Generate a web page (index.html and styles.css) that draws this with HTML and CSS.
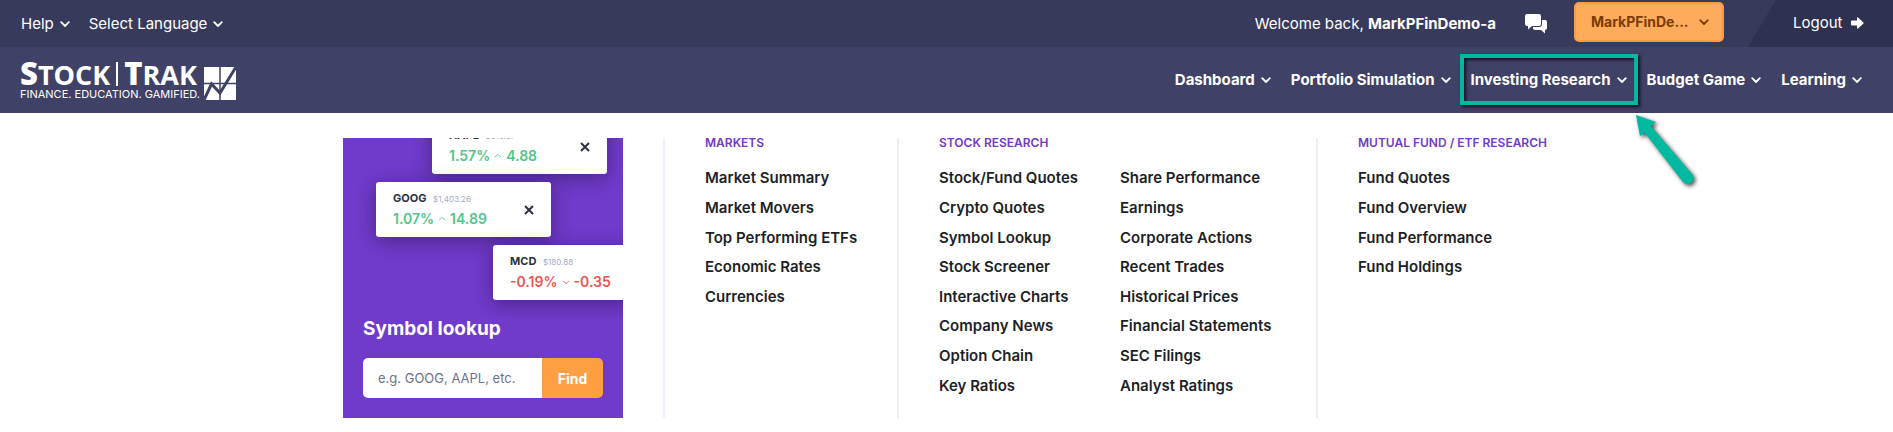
FILE: index.html
```html
<!DOCTYPE html>
<html lang="en">
<head>
  <meta charset="UTF-8" />
  <meta name="viewport" content="width=device-width, initial-scale=1.0" />
  <title>Stock-Trak | Investing Research</title>
  <link rel="stylesheet" href="styles.css">
</head>
<body>
  <!-- shared icons -->
  <svg class="sprite" aria-hidden="true">
    <symbol id="chevron" viewBox="0 0 10 10">
      <path d="M1.2 3.2 5 7 8.8 3.2" fill="none" stroke="currentColor" stroke-width="1.8" stroke-linecap="round" stroke-linejoin="round" />
    </symbol>
    <symbol id="close" viewBox="0 0 10 10">
      <path d="M1 1 9 9M9 1 1 9" fill="none" stroke="currentColor" stroke-width="2" />
    </symbol>
    <symbol id="trend" viewBox="0 0 10 10">
      <path d="M1 6.5 5 3 9 6.5" fill="none" stroke="currentColor" stroke-width="1" />
    </symbol>
  </svg>

  <header>
    <div class="topbar">
      <nav class="top-links" aria-label="Help and language">
        <a href="#">Help <svg class="chevron"><use href="#chevron" /></svg></a>
        <a href="#">Select Language <svg class="chevron"><use href="#chevron" /></svg></a>
      </nav>
      <p class="welcome">Welcome back, <strong>MarkPFinDemo-a</strong></p>
      <a class="chat" href="#" aria-label="Messages">
        <svg viewBox="0 0 22 20">
          <path d="M17 6h3a2 2 0 0 1 2 2v6a2 2 0 0 1-2 2v3.500L16 16h-6a2 2 0 0 1-2-2v-1h6a3 3 0 0 0 3-3z" fill="currentColor" />
          <path d="M2 0h12a2 2 0 0 1 2 2v8a2 2 0 0 1-2 2H7l-4 3.500V12H2a2 2 0 0 1-2-2V2a2 2 0 0 1 2-2z" fill="currentColor" />
        </svg>
      </a>
      <button class="account" type="button">MarkPFinDe... <svg class="chevron"><use href="#chevron" /></svg></button>
      <a class="logout" href="#">Logout
        <svg viewBox="0 0 13 12"><path d="M1 3.500h5V1q0-1 1-.5l5.500 5q.5.5 0 1L7 11.500q-1 .5-1-.5V8.500H1q-1 0-1-1v-3q0-1 1-1z" fill="currentColor" /></svg>
      </a>
    </div>

    <div class="mainbar">
      <a class="logo" href="#">
        <span class="logo-text">
          <span class="logo-name"><b>S</b>TOCK<i></i><b>T</b>RAK</span>
          <span class="logo-tag">FINANCE. EDUCATION. GAMIFIED.</span>
        </span>
        <svg class="logo-mark" viewBox="0 0 32 33">
          <path d="M0 0h32v33H0z" fill="#fff" />
          <path d="M16 0v33M0 16.500h32" stroke="#3f4166" stroke-width="1.500" />
          <path d="M0 33 7.500 17l8.500 9L32 0" fill="none" stroke="#3f4166" stroke-width="3" />
        </svg>
      </a>
      <nav class="main-nav" aria-label="Main">
        <a href="#">Dashboard <svg class="chevron"><use href="#chevron" /></svg></a>
        <a href="#">Portfolio Simulation <svg class="chevron"><use href="#chevron" /></svg></a>
        <a class="active" href="#">Investing Research <svg class="chevron"><use href="#chevron" /></svg>
          <svg class="pointer" viewBox="0 0 66 76">
            <path d="M2 2 22 9 17 13 58 61A6 6 0 0 1 49 69L11 20 6 23Z" fill="#00b9a0" />
          </svg>
        </a>
        <a href="#">Budget Game <svg class="chevron"><use href="#chevron" /></svg></a>
        <a href="#">Learning <svg class="chevron"><use href="#chevron" /></svg></a>
      </nav>
    </div>
  </header>

  <main class="mega-menu">
    <section class="lookup">
      <div class="quotes">
        <div class="quote quote-aapl">
          <div class="quote-name">AAPL <small>$315.67</small></div>
          <div class="quote-change">1.57% <svg><use href="#trend" /></svg> 4.88</div>
          <svg class="close"><use href="#close" /></svg>
        </div>
        <div class="quote quote-goog">
          <div class="quote-name">GOOG <small>$1,403.26</small></div>
          <div class="quote-change">1.07% <svg><use href="#trend" /></svg> 14.89</div>
          <svg class="close"><use href="#close" /></svg>
        </div>
        <div class="quote quote-mcd">
          <div class="quote-name">MCD <small>$180.88</small></div>
          <div class="quote-change down">-0.19% <svg><use href="#trend" /></svg> -0.35</div>
        </div>
      </div>
      <form class="lookup-form">
        <label for="symbol">Symbol lookup</label>
        <div class="field">
          <input id="symbol" type="text" placeholder="e.g. GOOG, AAPL, etc." />
          <button type="submit">Find</button>
        </div>
      </form>
    </section>

    <section class="menu-col">
      <h2>MARKETS</h2>
      <ul>
        <li><a href="#">Market Summary</a></li>
        <li><a href="#">Market Movers</a></li>
        <li><a href="#">Top Performing ETFs</a></li>
        <li><a href="#">Economic Rates</a></li>
        <li><a href="#">Currencies</a></li>
      </ul>
    </section>

    <section class="menu-col wide">
      <h2>STOCK RESEARCH</h2>
      <ul>
        <li><a href="#">Stock/Fund Quotes</a></li>
        <li><a href="#">Crypto Quotes</a></li>
        <li><a href="#">Symbol Lookup</a></li>
        <li><a href="#">Stock Screener</a></li>
        <li><a href="#">Interactive Charts</a></li>
        <li><a href="#">Company News</a></li>
        <li><a href="#">Option Chain</a></li>
        <li><a href="#">Key Ratios</a></li>
        <li><a href="#">Share Performance</a></li>
        <li><a href="#">Earnings</a></li>
        <li><a href="#">Corporate Actions</a></li>
        <li><a href="#">Recent Trades</a></li>
        <li><a href="#">Historical Prices</a></li>
        <li><a href="#">Financial Statements</a></li>
        <li><a href="#">SEC Filings</a></li>
        <li><a href="#">Analyst Ratings</a></li>
      </ul>
    </section>

    <section class="menu-col">
      <h2>MUTUAL FUND / ETF RESEARCH</h2>
      <ul>
        <li><a href="#">Fund Quotes</a></li>
        <li><a href="#">Fund Overview</a></li>
        <li><a href="#">Fund Performance</a></li>
        <li><a href="#">Fund Holdings</a></li>
      </ul>
    </section>
  </main>
</body>
</html>
```
FILE: styles.css
```css
* {
  margin: 0;
  padding: 0;
  box-sizing: border-box;
}

body {
  font-family: Inter, "Open Sans", sans-serif;
  font-size: 15px;
  color: #1d1f26;
  background: #fff;
}

a {
  color: inherit;
  text-decoration: none;
}

.sprite {
  position: absolute;
  width: 0;
  height: 0;
}

.chevron {
  width: 10px;
  height: 10px;
  margin-left: 6px;
  flex: none;
}

/* top bar */
.topbar {
  display: flex;
  align-items: center;
  height: 47px;
  padding-left: 21px;
  color: #fff;
  background: #383a5b;
}

.top-links {
  display: flex;
  gap: 19px;
  margin-right: auto;
}

.top-links a,
.main-nav a,
.logout {
  display: flex;
  align-items: center;
  white-space: nowrap;
}

.chat {
  width: 22px;
  height: 20px;
  margin: 0 27px 0 29px;
}

.chat svg {
  display: block;
}

.account {
  display: flex;
  align-items: center;
  justify-content: space-between;
  width: 150px;
  height: 40px;
  margin-bottom: 4px;
  padding: 0 13px 0 15px;
  font: bold 14px Inter, sans-serif;
  color: #7a3c05;
  background: #ffab5c;
  border: 2px solid #ff9b3d;
  border-radius: 5px;
}

.logout {
  justify-content: space-between;
  align-self: stretch;
  width: 145px;
  margin-left: 24px;
  padding: 0 29px 2px 45px;
  background: #2e3150;
  clip-path: polygon(28px 0, 100% 0, 100% 100%, 0 100%);
}

.logout svg {
  width: 13px;
  height: 12px;
}

/* main bar */
.mainbar {
  display: flex;
  align-items: center;
  justify-content: space-between;
  height: 66px;
  padding: 0 31px 0 20px;
  color: #fff;
  background: #3f4166;
}

.logo {
  display: flex;
  align-items: flex-end;
  gap: 4px;
}

.logo-text {
  display: flex;
  flex-direction: column;
}

.logo-name {
  display: flex;
  align-items: baseline;
  font: bold 27px/26px "Open Sans", sans-serif;
}

.logo-name b {
  font-size: 31px;
}

.logo-name i {
  width: 2px;
  height: 24px;
  margin: 0 6px;
  align-self: center;
  background: #fff;
}

.logo-tag {
  font-size: 11px;
  line-height: 12px;
}

.logo-mark {
  width: 32px;
  height: 33px;
}

.main-nav {
  display: flex;
  gap: 20px;
  padding-bottom: 1px;
  font-weight: bold;
}

.active {
  position: relative;
}

.active::before {
  content: "";
  position: absolute;
  inset: -16px -11px;
  border: 4px solid #00b9a0;
  box-shadow: 2px 2px 3px #111222, inset 2px 2px 3px #111222;
}

.pointer {
  position: absolute;
  top: 43px;
  right: -73px;
  width: 66px;
  height: 76px;
  filter: drop-shadow(2px 2px 2px rgba(0, 0, 0, 0.7));
}

/* dropdown panel */
.mega-menu {
  display: flex;
  max-width: 1207px;
  margin: 25px auto 14px;
}

.lookup {
  display: flex;
  flex-direction: column;
  width: 280px;
  height: 280px;
  margin-right: 40px;
  flex: none;
  color: #fff;
  background: #703acb;
}

.quotes {
  position: relative;
  height: 180px;
  overflow: hidden;
}

.quote {
  position: absolute;
  width: 175px;
  height: 55px;
  padding: 9px 17px;
  background: #fff;
  border-radius: 3px;
  box-shadow: 0 4px 20px rgba(0, 0, 0, 0.35);
}

.quote-aapl {
  top: -19px;
  left: 89px;
}

.quote-goog {
  top: 44px;
  left: 33px;
}

.quote-mcd {
  top: 107px;
  left: 150px;
}

.quote-name {
  font-size: 11px;
  line-height: 15px;
  font-weight: bold;
  color: #2c3142;
}

.quote-name small {
  margin-left: 4px;
  font-size: 8px;
  font-weight: normal;
  color: #a5abc0;
}

.quote-change {
  display: flex;
  align-items: center;
  gap: 4px;
  font-size: 14px;
  line-height: 24px;
  font-weight: 600;
  white-space: nowrap;
  color: #51c58c;
}

.quote-change svg {
  width: 8px;
  height: 8px;
}

.quote-change.down {
  color: #ee5350;
}

.down svg {
  transform: rotate(180deg);
}

.close {
  position: absolute;
  top: 23px;
  right: 17px;
  width: 10px;
  height: 10px;
  color: #2c3142;
}

.lookup-form {
  padding: 0 20px;
}

.lookup-form label {
  display: block;
  margin-bottom: 18px;
  font-size: 19px;
  line-height: 22px;
  font-weight: bold;
}

.field {
  display: flex;
  height: 40px;
  border-radius: 5px;
  overflow: hidden;
}

.field input {
  flex: 1;
  min-width: 0;
  padding: 0 15px;
  font: 13px Inter, sans-serif;
  border: none;
}

.field input::placeholder {
  color: #6d7387;
}

.field button {
  width: 61px;
  font: bold 14px Inter, sans-serif;
  color: #fff;
  background: #ff9f43;
  border: none;
}

.menu-col {
  display: flex;
  flex-direction: column;
  min-width: 234px;
  padding: 0 0 18px 40px;
  white-space: nowrap;
  border-left: 2px solid #ebf0fa;
}

.menu-col h2 {
  margin-bottom: 15px;
  font-size: 12px;
  line-height: 10px;
  font-weight: 600;
  color: #703acb;
}

.menu-col ul {
  display: grid;
  flex: 1;
  grid-template-rows: repeat(8, 1fr);
  grid-auto-flow: column;
  align-items: center;
  justify-content: start;
  column-gap: 42px;
  list-style: none;
  font-weight: 600;
}

.menu-col.wide {
  min-width: 419px;
}
```
